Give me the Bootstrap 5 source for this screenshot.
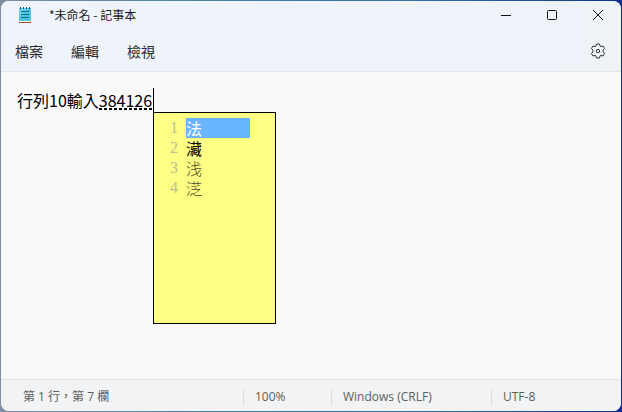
<!DOCTYPE html>
<html lang="zh-Hant">
<head>
<meta charset="utf-8">
<meta name="viewport" content="width=device-width, initial-scale=1">
<title>*未命名 - 記事本</title>
<link href="https://cdn.jsdelivr.net/npm/bootstrap@5.3.0/dist/css/bootstrap.min.css" rel="stylesheet">
<style>
body{font-family:"Open Sans","Noto Sans CJK TC",sans-serif;color:#1b1b1b;padding:1px;background:linear-gradient(90deg,#7e8ea0,#3f82a4 40%,#2d6f9f 70%,#102f96)}
.np-window{border-radius:8px;background:#f9f9f9}
.np-head{background:linear-gradient(90deg,#eff3fb 50%,#eef3f8);border-bottom:1px solid #e3e5e8}
.np-title{height:28px;padding-left:16px}
.np-name{font-family:"Noto Sans CJK TC",sans-serif;font-size:12px;margin-left:16px;line-height:18px}
.np-ctl{width:46px;height:28px;color:#111}
.np-menu{height:42px;padding:2px 9px 0 0}
.np-menu .np-item{font-family:"Noto Sans CJK TC",sans-serif;font-size:14px;line-height:20px;width:56px;height:32px;color:#2a2a2a}
.np-gear{width:28px;height:28px;color:#30353a}
.np-text{font-family:"Noto Sans CJK TC",sans-serif;font-size:16px;line-height:24px;padding:16px;color:#000;outline:0}
.np-comp-text{display:block;padding-right:1px;height:24px;background:repeating-linear-gradient(90deg,#000 0 3px,transparent 3px 5px) 0 20px/100% 2px no-repeat}
.np-caret{width:1px;height:24px;background:#000}
.ime{left:100%;top:24px;width:123px;height:212px;background:#ffff85;border:1px solid #000;padding:5px 25px 0 16px;list-style:none;font-family:"Liberation Serif","Noto Sans CJK TC",serif;font-size:16px}
.ime-row{height:20px;line-height:20px}
.ime-key{width:16px;color:#bcbc9a}
.ime-word{font-family:"Noto Sans CJK TC",sans-serif;color:#000}
.ime-on{background:#6ab5ff;color:#fff}
.ime-dim{color:#4d4d27;font-weight:300}
.np-status{height:32px;background:#f1f3f5;border-top:1px solid #e3e4e5;font-size:12px;color:#5c5e60;padding:2px 0 0 22px}
.np-cell{height:16px;line-height:16px;border-left:1px solid #dcdee0;padding-left:11px}
.np-zoom{width:88px}.np-eol{width:160px}.np-enc{width:130px}
</style>
<script src="https://cdn.jsdelivr.net/npm/bootstrap@5.3.0/dist/js/bootstrap.bundle.min.js"></script>
</head>
<body class="vh-100">
<main class="np-window d-flex flex-column h-100 overflow-hidden">
  <header class="np-head">
    <div class="np-title d-flex align-items-center">
      <svg width="16" height="18" viewBox="0 0 16 18" aria-hidden="true"><path d="M2 2h12v14H2z" fill="#4fc3dd"/><path d="M2 2h9L2 12z" fill="#68cee5"/><path d="M2 16h12v1H2z" fill="#9c4a16"/><path d="M2 15h12v1H2z" fill="#fff"/><path d="M13 14h1v2h-1z" fill="#e9b68c"/><path d="M3 1h1v2H3zM6 1h1v2H6zM9 1h1v2H9zM12 1h1v2h-1z" fill="#164e63"/><path d="M4 5.500h8M4 8.500h8M4 11.500h8" stroke="#08708f"/></svg>
      <span class="np-name me-auto">*未命名 - 記事本</span>
      <button class="np-ctl btn p-0 border-0 rounded-0 d-flex align-items-center justify-content-center" aria-label="最小化"><svg width="12" height="12" fill="none" stroke="currentColor"><path d="M1 6.500h10"/></svg></button>
      <button class="np-ctl btn p-0 border-0 rounded-0 d-flex align-items-center justify-content-center" aria-label="最大化"><svg width="12" height="12" fill="none" stroke="currentColor"><rect x="1.500" y="1.500" width="9" height="9" rx="1"/></svg></button>
      <button class="np-ctl btn p-0 border-0 rounded-0 d-flex align-items-center justify-content-center" aria-label="關閉"><svg width="12" height="12" fill="none" stroke="currentColor"><path d="M1 1l10 10M11 1L1 11"/></svg></button>
    </div>
    <nav class="np-menu d-flex align-items-center" aria-label="功能表">
      <button class="np-item btn p-0 border-0">檔案</button>
      <button class="np-item btn p-0 border-0">編輯</button>
      <button class="np-item btn p-0 border-0">檢視</button>
      <button class="np-gear btn p-0 border-0 ms-auto d-flex align-items-center justify-content-center" aria-label="設定"><svg width="16" height="16" viewBox="0 0 16 16" fill="none" stroke="currentColor" stroke-linejoin="round"><path d="M6.500 1h3l.5 2 1 .6 2-.6 1.600 2.500-1.500 1.500v2l1.500 1.500L13 13l-2-.6-1 .6-.5 2h-3L6 13l-1-.6-2 .6-1.600-2.500L2.900 9V7L1.400 5.500 3 3l2 .6L6 3z"/><circle cx="8" cy="8" r="1.700"/></svg></button>
    </nav>
  </header>
  <div class="np-text flex-grow-1" role="textbox" aria-multiline="true" aria-label="文字編輯器" contenteditable="true" spellcheck="false"><div class="d-flex"><span>行列10輸入</span><span class="position-relative"><span class="np-comp-text">384126</span><ol class="ime position-absolute mb-0" contenteditable="false"><li class="ime-row d-flex"><span class="ime-key">1</span><span class="ime-word ime-on flex-grow-1">法</span></li><li class="ime-row d-flex"><span class="ime-key">2</span><span class="ime-word">&#x3D93;</span></li><li class="ime-row d-flex"><span class="ime-key">3</span><span class="ime-word ime-dim">浅</span></li><li class="ime-row d-flex"><span class="ime-key">4</span><span class="ime-word ime-dim">&#x3D00;</span></li></ol></span><span class="np-caret"></span></div></div>
  <footer class="np-status d-flex align-items-center">
    <span class="me-auto">第 1 行，第 7 欄</span>
    <span class="np-cell np-zoom">100%</span>
    <span class="np-cell np-eol">Windows (CRLF)</span>
    <span class="np-cell np-enc">UTF-8</span>
  </footer>
</main>
</body>
</html>
